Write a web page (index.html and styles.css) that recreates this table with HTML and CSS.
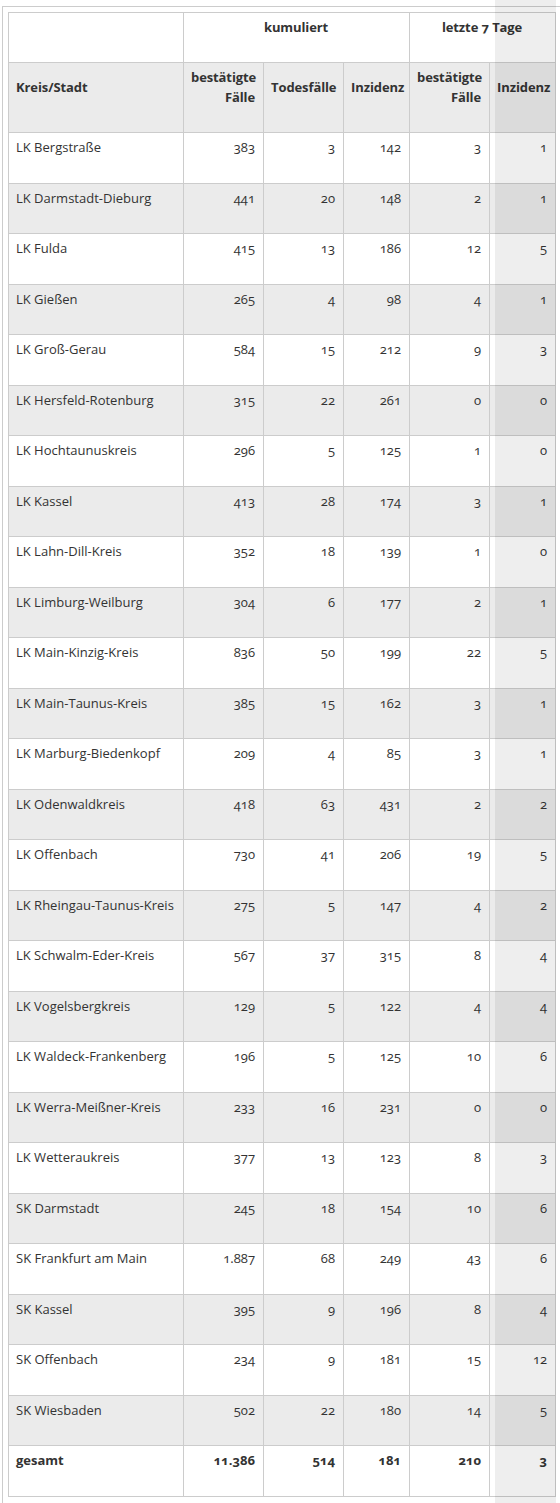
FILE: index.html
```html
<!DOCTYPE html>
<html lang="de">
<head>
<meta charset="utf-8">
<title>Corona Hessen</title>
<link rel="stylesheet" href="styles.css">
</head>
<body>
<div class="frame">
<table class="stats">
<colgroup>
<col class="c-name"><col class="c-num"><col class="c-num"><col class="c-inc"><col class="c-num"><col class="c-inc">
</colgroup>
<thead>
<tr class="h1">
<th></th>
<th colspan="3" class="center">kumuliert</th>
<th colspan="2" class="center">letzte 7 Tage</th>
</tr>
<tr class="h2">
<th class="left">Kreis/Stadt</th>
<th>bestätigte<br>Fälle</th>
<th>Todesfälle</th>
<th>Inzidenz</th>
<th>bestätigte<br>Fälle</th>
<th>Inzidenz</th>
</tr>
</thead>
<tbody>
<tr><td>LK Bergstraße</td><td>383</td><td>3</td><td>142</td><td>3</td><td>1</td></tr>
<tr><td>LK Darmstadt-Dieburg</td><td>441</td><td>20</td><td>148</td><td>2</td><td>1</td></tr>
<tr><td>LK Fulda</td><td>415</td><td>13</td><td>186</td><td>12</td><td>5</td></tr>
<tr><td>LK Gießen</td><td>265</td><td>4</td><td>98</td><td>4</td><td>1</td></tr>
<tr><td>LK Groß-Gerau</td><td>584</td><td>15</td><td>212</td><td>9</td><td>3</td></tr>
<tr><td>LK Hersfeld-Rotenburg</td><td>315</td><td>22</td><td>261</td><td>0</td><td>0</td></tr>
<tr><td>LK Hochtaunuskreis</td><td>296</td><td>5</td><td>125</td><td>1</td><td>0</td></tr>
<tr><td>LK Kassel</td><td>413</td><td>28</td><td>174</td><td>3</td><td>1</td></tr>
<tr><td>LK Lahn-Dill-Kreis</td><td>352</td><td>18</td><td>139</td><td>1</td><td>0</td></tr>
<tr><td>LK Limburg-Weilburg</td><td>304</td><td>6</td><td>177</td><td>2</td><td>1</td></tr>
<tr><td>LK Main-Kinzig-Kreis</td><td>836</td><td>50</td><td>199</td><td>22</td><td>5</td></tr>
<tr><td>LK Main-Taunus-Kreis</td><td>385</td><td>15</td><td>162</td><td>3</td><td>1</td></tr>
<tr><td>LK Marburg-Biedenkopf</td><td>209</td><td>4</td><td>85</td><td>3</td><td>1</td></tr>
<tr><td>LK Odenwaldkreis</td><td>418</td><td>63</td><td>431</td><td>2</td><td>2</td></tr>
<tr><td>LK Offenbach</td><td>730</td><td>41</td><td>206</td><td>19</td><td>5</td></tr>
<tr><td>LK Rheingau-Taunus-Kreis</td><td>275</td><td>5</td><td>147</td><td>4</td><td>2</td></tr>
<tr><td>LK Schwalm-Eder-Kreis</td><td>567</td><td>37</td><td>315</td><td>8</td><td>4</td></tr>
<tr><td>LK Vogelsbergkreis</td><td>129</td><td>5</td><td>122</td><td>4</td><td>4</td></tr>
<tr><td>LK Waldeck-Frankenberg</td><td>196</td><td>5</td><td>125</td><td>10</td><td>6</td></tr>
<tr><td>LK Werra-Meißner-Kreis</td><td>233</td><td>16</td><td>231</td><td>0</td><td>0</td></tr>
<tr><td>LK Wetteraukreis</td><td>377</td><td>13</td><td>123</td><td>8</td><td>3</td></tr>
<tr><td>SK Darmstadt</td><td>245</td><td>18</td><td>154</td><td>10</td><td>6</td></tr>
<tr><td>SK Frankfurt am Main</td><td>1.887</td><td>68</td><td>249</td><td>43</td><td>6</td></tr>
<tr><td>SK Kassel</td><td>395</td><td>9</td><td>196</td><td>8</td><td>4</td></tr>
<tr><td>SK Offenbach</td><td>234</td><td>9</td><td>181</td><td>15</td><td>12</td></tr>
<tr><td>SK Wiesbaden</td><td>502</td><td>22</td><td>180</td><td>14</td><td>5</td></tr>
<tr class="total"><td>gesamt</td><td>11.386</td><td>514</td><td>181</td><td>210</td><td>3</td></tr>
</tbody>
</table>
</div>
<div class="shade"></div>
</body>
</html>
```

FILE: styles.css
```css
html, body {
  margin: 0;
  padding: 0;
  background: #fff;
}

body {
  font-family: "Open Sans", "Liberation Sans", sans-serif;
  font-size: 13px;
  color: #333;
}

.frame {
  margin: 6px 0 0 2px;
  padding: 5px 0 8px 5px;
  border-left: 1px solid #ccc;
  border-top: 1px solid #ccc;
}

.stats {
  border-collapse: collapse;
  table-layout: fixed;
  width: 548px;
}

.c-name { width: 175px; }
.c-num { width: 80px; }
.c-inc { width: 66px; }

.stats th,
.stats td {
  border: 1px solid #ccc;
  padding: 4px 8px 0 7px;
  line-height: 20px;
  vertical-align: top;
  text-align: right;
  font-variant-numeric: oldstyle-nums;
}

.stats th {
  font-weight: 700;
  letter-spacing: -0.1px;
}

.stats th.center { text-align: center; }
.stats th.left { text-align: left; }
.stats td:first-child { text-align: left; }

.h1 { height: 50px; }
.h1 th { background: #fff; }

.h2 { height: 70px; }
.h2 th {
  background: #ebebeb;
  vertical-align: middle;
  padding-top: 2px;
  padding-bottom: 24px;
}

.stats tbody tr { height: 50.5px; }
.stats tbody tr:nth-child(even) td { background: #ebebeb; }
.stats tbody tr.total td { font-weight: 700; background: #fff; }

.shade {
  position: absolute;
  top: 0;
  left: 495px;
  width: 61px;
  height: 1503px;
  background: rgba(0, 0, 0, 0.067);
  pointer-events: none;
}
```
